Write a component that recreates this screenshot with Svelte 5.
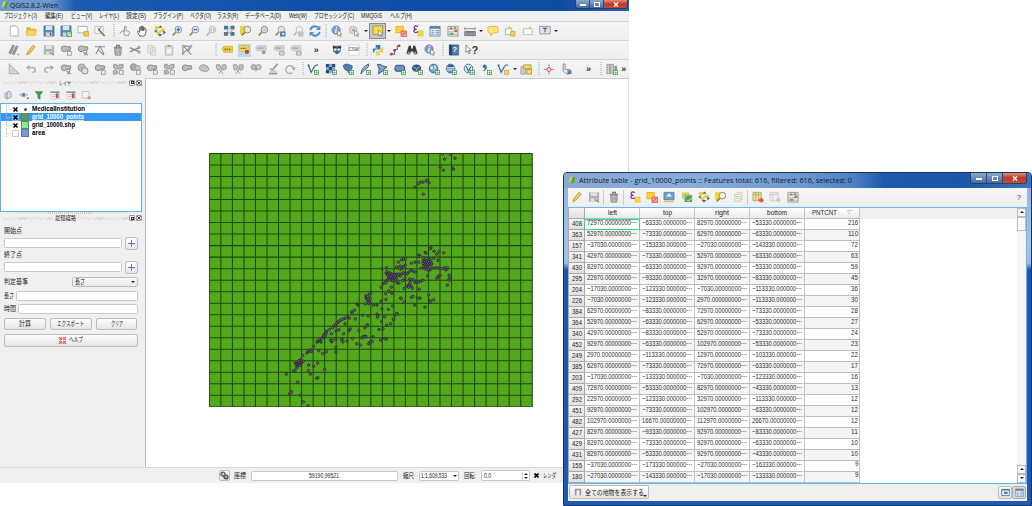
<script>
  const JP = '"Liberation Sans", "Noto Sans CJK JP", sans-serif';

  const menus = [
    ['プロジェクト(J)', 33, 8], ['編集(E)', 18, 8], ['ビュー(V)', 21, 7], ['レイヤ(L)', 20, 7],
    ['設定(S)', 20, 7], ['プラグイン(P)', 30, 7], ['ベクタ(O)', 21, 6], ['ラスタ(R)', 21, 7],
    ['データベース(D)', 36, 8], ['Web(W)', 18, 7], ['プロセッシング(C)', 40, 7], ['MMQGIS', 21, 8], ['ヘルプ(H)', 22, 0],
  ];

  const plus = '<rect x="8.2" y="8.2" width="4.3" height="4.3" fill="#fff" stroke="#4d9a5a" stroke-width=".9"/><path d="M10.35 9v2.8M9 10.35h2.8" stroke="#4d9a5a" stroke-width=".7"/>';
  const gplus = '<rect x="8" y="8" width="4.2" height="4.2" fill="#eee" stroke="#999" stroke-width=".9"/>';
  const cursor = '<path d="M7 5.5l5 4.4-2.2.2 1.2 2.3-1 .4-1.1-2.4L7.300 12z" fill="#fff" stroke="#777" stroke-width=".7"/>';
  const lens = (fill, s = '#888', cx = 8) =>
    `<circle cx="${cx}" cy="5" r="3.6" fill="${fill}" stroke="${s}" stroke-width="1"/><path d="M5 8L1.800 11.300" stroke="#9b7c3c" stroke-width="1.700"/>`;
  const blob = '<path d="M2 3.500Q4 1.500 6 2.500T11 3Q12.500 5 10.500 7Q8.500 6 6.500 7.500Q4.500 9 2.500 7.500Q.8 5.500 2 3.500z" fill="#bdbdbd" stroke="#8f8f8f" stroke-width="1.200"/>';
  const globe = '<circle cx="6" cy="6" r="4.700" fill="#6f9bc8" stroke="#34597f" stroke-width=".9"/>';
  const vee = '<path d="M1.500 2.500L4.500 10L8 4Q9 2 12 2" fill="none" stroke="#41709b" stroke-width="1.400"/><circle cx="1.700" cy="2.500" r="1.200" fill="#41709b"/>';
  const trash = '<path d="M2 3.500h9M5 3V1.500h3V3" fill="none" stroke="#777" stroke-width="1.200"/><path d="M3 4.500h7l-.5 7.500h-6z" fill="#ccc" stroke="#777"/><path d="M5.300 6v4.500M7.700 6v4.500" stroke="#777" stroke-width=".8"/>';
  const yell = '<rect x="1" y="1.500" width="8" height="7" fill="#f8d830" stroke="#e6a529" stroke-width=".8"/>';

  const icons = {
    newfile: '<path d="M2.500 1h6l2.500 2.500V12h-8.500z" fill="#fff" stroke="#aaa"/>',
    open: '<path d="M1.500 2.500h4l1 1.500h5v7h-10z" fill="#dfae36"/><path d="M1.500 11L3 5.500h10L11.200 11z" fill="#ffd55a" stroke="#e0aa30" stroke-width=".5"/>',
    save: '<path d="M1 1h11v11H1z" fill="#5b88b9" stroke="#3f6a9b" stroke-width=".7"/><path d="M3 1h7v4.500H3z" fill="#dce6ef"/><path d="M3 8h7v4H3z" fill="#cfd4d8"/><path d="M7.500 8.500h1.500v3H7.500z" fill="#555"/>',
    saveas: '<path d="M1 1h11v11H1z" fill="#5b88b9" stroke="#3f6a9b" stroke-width=".7"/><path d="M3 1h7v4.500H3z" fill="#dce6ef"/><path d="M3 8h4v4H3z" fill="#cfd4d8"/><path d="M7.500 7.500h5v5h-5z" fill="#eaf4ea" stroke="#4d9a5a"/><path d="M8.700 11.300l2.600-2.600" stroke="#4d9a5a"/>',
    composer: '<path d="M1 1.500h10v7H1z" fill="#fff" stroke="#aaa"/><path d="M7.500 7h5v5h-5z" fill="#f4ce42" stroke="#c9982c" stroke-width=".7"/>',
    manager: '<path d="M1 1.500h9v7.500H1z" fill="#fff" stroke="#bbb"/><path d="M5 5l6.500 7" stroke="#8a7645" stroke-width="1.700"/><path d="M4 3l2 3M7 2.500L5 6" stroke="#666"/>',
    touch: '<path d="M6 1.500v5.500l-1.500-1 1.500 5.500h4.500l1-4-4-1.500V1.500z" fill="#eee" stroke="#888" stroke-width=".8"/><path d="M1 9l3-3" stroke="#777"/>',
    hand: '<path d="M4 12L1.500 7l1-.6L4 8V2.500h1.400V6 1.500h1.500V6 2h1.500v4.500V3.500H10l1 2L10.500 9 9 12z" fill="#fff" stroke="#555" stroke-width="1"/>',
    pansel: '<path d="M1 1h4v3.500H1zM7 4h4.500v3.500H7zM3 6.500h4V10H3z" fill="#edcf32"/><path d="M7 .5l2.500 2.500h-5zM6.500 12.800l2.500-3H4zM12.900 8L10 5.800v4.400zM.1 6.500L3 4.500v4z" fill="#436b9c"/>',
    zoomin: lens('#e8eef4') + '<path d="M8 3v4M6 5h4" stroke="#356fae" stroke-width="1.500"/>',
    zoomout: lens('#e8eef4') + '<path d="M6 5h4" stroke="#356fae" stroke-width="1.500"/>',
    zoom11: '<g opacity=".55">' + lens('#eee') + '<path d="M6.500 3.200v3.600M9.500 3.200v3.600" stroke="#555"/></g>',
    full: '<path d="M1 .8h4.500v4.200H1zM8 .8h4.500v4.200H8zM1 7.500h4.500v4.200H1zM8 7.500h4.500v4.200H8z" fill="#4674a7"/><circle cx="7" cy="6" r="2.700" fill="#d8e0e8" stroke="#888" stroke-width=".8"/><path d="M5 8l-3.500 3.800" stroke="#9b7c3c" stroke-width="1.500"/>',
    zoomsel: '<path d="M0 1h6v9H0z" fill="#f1d537"/>' + lens('#f2eecb'),
    zoomlay: lens('#ddd') + '<path d="M6.500 3.500h4v3h-4z" fill="#ccc"/>',
    zoomlast: lens('#e8e8e8', '#999') + '<path d="M6.500 7h6v5.500h-6z" fill="#4d84bf"/><path d="M11 8.200L8 9.700l3 1.500z" fill="#fff"/>',
    zoomnext: '<g opacity=".5">' + lens('#eee') + '<path d="M6.500 7h6v5.500h-6z" fill="#999"/></g>',
    refresh: '<path d="M1.500 5.500A5 5 0 0 1 10 3" fill="none" stroke="#4b8fd0" stroke-width="2.100"/><path d="M12.300.5v5H7.500z" fill="#4b8fd0"/><path d="M11.500 7.500A5 5 0 0 1 3 10" fill="none" stroke="#4b8fd0" stroke-width="2.100"/><path d="M.7 12.500v-5h4.800z" fill="#4b8fd0"/>',
    info: '<circle cx="5.500" cy="5.500" r="4.600" fill="#7d9fc4" stroke="#5c80a8" stroke-width=".6"/><path d="M5.700 4.500l-.7 4" stroke="#fff" stroke-width="1.300"/><circle cx="6" cy="2.800" r=".8" fill="#fff"/>' + cursor,
    action: '<circle cx="5.500" cy="5.500" r="4" fill="#ddd" stroke="#bbb" stroke-width="1.800" stroke-dasharray="2 1"/><circle cx="5.500" cy="5.500" r="1.500" fill="#aaa"/>' + cursor,
    select: '<path d="M1 1h10.500v9.500H1z" fill="#f5df3c" stroke="#555" stroke-width=".9" stroke-dasharray="1.500 1"/>' + cursor,
    desel: yell + '<path d="M6.500 6.500h6v6h-6z" fill="#f3a09a" stroke="#db5a55" stroke-width=".9"/><path d="M7.500 11.500l4-4" stroke="#db4a45"/>',
    expr: '<path d="M6.500 1.700Q3.500.2 2.500 2.200T5 4.700Q1.500 5 2 7T6.500 7.500" fill="none" stroke="#7b3189" stroke-width="1.300"/><path d="M6.500 6.500H12V12H6.500z" fill="#f5db3b" stroke="#e0b030" stroke-width=".6"/>',
    table: '<path d="M1 1.500h11v10.500H1z" fill="#e9f0f5" stroke="#5d7f9c" stroke-width=".9"/><path d="M1 1.500h11v2.500H1z" fill="#587da2"/><path d="M2.500 6h3M2.500 8h3M2.500 10h3M7 6h4M7 8h4M7 10h4" stroke="#6d97b7"/>',
    abacus: '<path d="M1 1.500h11v10.500H1z" fill="#f6f1f0" stroke="#999"/><path d="M1 4.500h11M1 7.300h11M1 10h11" stroke="#888" stroke-width=".6"/><path d="M3 2.700h3v2H3zM8 5.500h3v2H8z" fill="#d85a55"/><path d="M3 8.500h4v2.200H3zM7.500 2.500H10v2H7.500z" fill="#66a86a"/>',
    measure: '<path d="M.8 7h11.500v4.500H.8z" fill="#8e9aa5" stroke="#59636d" stroke-width=".8"/><path d="M1 4h11M1 2.500v3M12 2.500v3M4 7v2M6.500 7v2M9 7v2" stroke="#555" stroke-width=".7"/>',
    tip: '<path d="M3 1.500h7Q12 1.500 12 3.500v3Q12 8.500 10 8.500H7L4 12V8.500H3Q1 8.500 1 6.500v-3Q1 1.500 3 1.500z" fill="#ffe47a" stroke="#dfb644"/>',
    newbm: '<path d="M1.500 4h7v6.500h-7z" fill="#fff" stroke="#aaa"/><path d="M6 1.200l2 2.500H4z" fill="#e7bd52"/><path d="M7 7h5v5H7z" fill="#f6cf4f" stroke="#c89833" stroke-width=".7"/>',
    bm: '<path d="M1.500 4h9.500v6.500H1.500z" fill="#fff" stroke="#bbb"/><path d="M8.500 1l2 3H7z" fill="#e7bd52"/>',
    textann: '<path d="M.8 1.500h11.400v8H.8z" fill="#dfe7ed" stroke="#8b9aa8"/><path d="M4 3.500h5M6.500 3.500V8" stroke="#444"/><path d="M2 9.500v2.500l3-2.500" fill="#ccc"/>',
    pens: '<path d="M1 10L5 1l2 .8-4 9zM4.500 10.500L9 2l2 .8-4.500 9z" fill="#999" stroke="#888" stroke-width=".8"/><path d="M10 11l1 1.500 1-1.500z" fill="#444"/>',
    pencil: '<path d="M2 11.700l.8-3L8.500 1.500 11 3.300 5 10.500z" fill="#f0cd45" stroke="#b48e27" stroke-width=".8"/><path d="M8.500 1.500L11 3.300" stroke="#caa" stroke-width="1.500"/>',
    gsave: '<path d="M1 1.500h11v10H1z" fill="#b0b0b0"/><path d="M3 1.500h7v4H3zM3 8h7v3.500H3z" fill="#e2e2e2"/><path d="M7 9l5 3" stroke="#999" stroke-width="1.500"/>',
    blob1: blob + gplus,
    blob2: blob + '<path d="M7 9l5 3M8 12l3-4" stroke="#888" stroke-width="1.200"/>',
    blob3: blob,
    blob4: '<path d="M1.500 6Q2 1.500 6.500 2T12 7Q11 9.500 6.500 9T1.500 6z" fill="#c5c5c5" stroke="#929292"/>',
    ghost: '<circle cx="5" cy="5" r="4" fill="#bbb" stroke="#999"/><circle cx="8.500" cy="8.500" r="3.500" fill="#ddd" stroke="#888"/>',
    disc: '<circle cx="5" cy="4.500" r="3.700" fill="#a9a9a9" stroke="#989898"/><path d="M7 3h5v4.500H7z" fill="#c9c9c9" stroke="#a0a0a0" stroke-width=".8"/>' + gplus,
    twin: '<path d="M2 1.500Q5 .5 6 3q3-2.500 6-1.300 1 3-1.500 4.800H6Q3 7 1.500 5z" fill="#b9b9b9" stroke="#959595"/><path d="M1.500 8.500Q4 6.500 6 9T4 12 1.500 11z" fill="#b9b9b9" stroke="#959595"/>' + gplus,
    node: '<path d="M1 3h11M2 11L6.500 2.500 11 11M4.500 6l6 6" fill="none" stroke="#8b8b8b" stroke-width="1.100"/>',
    trash: trash,
    cut: '<path d="M1 4l9 4M1 8.500L11 4" stroke="#888" stroke-width="1.500"/><circle cx="11" cy="3.700" r="1.200" fill="none" stroke="#888"/><circle cx="11" cy="8.800" r="1.200" fill="none" stroke="#888"/>',
    copy: '<path d="M2 1.500h5.500v8H2zM5 4h5.500v8H5z" fill="#eee" stroke="#c2c2c2" stroke-width=".9"/><path d="M6.500 6.500h3M6.500 8.500h3" stroke="#ccc"/>',
    paste: '<path d="M2.500 2h8v10h-8z" fill="#ddd" stroke="#b5b5b5"/><path d="M5 1h3v2H5z" fill="#999"/><path d="M4.500 5h4v5h-4z" fill="#f5f5f5"/>',
    zoompan: '<path d="M3 3.500h6V11H3z" fill="#f6f4e6" stroke="#c5c2ad" stroke-width=".9"/><path d="M5 1.800h6V9H9" fill="none" stroke="#c9c9c9" stroke-width=".9"/><path d="M4.500 6h3M4.500 8h3" stroke="#cbbf7a"/>',
    netx: '<path d="M2 1.500l9 10M2 11V2l9 1-9 7M11 2L8 8" fill="none" stroke="#999" stroke-width="1.400"/><path d="M1 .7h2.500v2.500H1zM10 .9h2v2h-2zM1 9.500h2.500V12H1z" fill="#aaa"/>',
    abc: '<path d="M1 5l2-2.500h9.500v6.500H3z" fill="#f1cf3c" stroke="#c9a32b" stroke-width=".7"/><path d="M3.500 5.800h7" stroke="#8d7a30" stroke-width="1.700" stroke-dasharray="1.700 .8"/>',
    abcpin: '<path d="M1 3.500l1.500-1.700H12v6H2.500L1 6.200z" fill="#f4d95b" stroke="#d5b241" stroke-width=".7"/><path d="M3 4.700h6" stroke="#77662a" stroke-width="1.500" stroke-dasharray="1.700 .8"/><circle cx="9.700" cy="8.500" r="2.300" fill="#c83b36"/>',
    gabc: '<path d="M1 3.500l1.500-1.700H12v5.500H2.500L1 6z" fill="#d5d5d5" stroke="#bbb" stroke-width=".7"/><path d="M3 4.500h6" stroke="#888" stroke-width="1.400" stroke-dasharray="1.700 .8"/><circle cx="9.500" cy="9" r="2" fill="#999"/>',
    gabc2: '<path d="M1 3.500l1.500-1.700H12v5.500H2.500L1 6z" fill="#d5d5d5" stroke="#bbb" stroke-width=".7"/><path d="M3 4.500h6" stroke="#888" stroke-width="1.400" stroke-dasharray="1.700 .8"/><path d="M7 8.500h5v3.500H7z" fill="#ddd" stroke="#999" stroke-width=".9"/>',
    owl: '<path d="M2.500 2h8v6l-4 3.500-4-3.500z" fill="#2f6da3"/><path d="M2 1.500l4.500 3 4.500-3V5H2z" fill="#333"/><circle cx="4.700" cy="6" r="1.500" fill="#dceaf5"/><circle cx="8.300" cy="6" r="1.500" fill="#dceaf5"/>',
    csw: '<path d="M.7 1h11.600v11H.7z" fill="#fff" stroke="#ccc" stroke-width=".8"/>',
    python: '<path d="M4 1h5v5H4Q2.500 6 2.500 9H1V5h5V4H4z" fill="#3a75a8"/><path d="M9 12.200H4.500V7.500H8Q10 7 9.800 4h2.400v5H7v1h2z" fill="#f2cc45"/>',
    route: '<path d="M2 11h4V6h3V2h2.500" fill="none" stroke="#4a78a9" stroke-width="1.200"/><circle cx="2.500" cy="11" r="1.500" fill="#cd3833"/><circle cx="6" cy="7" r="1.500" fill="#cd3833"/><circle cx="11" cy="2" r="1.500" fill="#cd3833"/>',
    bino: '<path d="M3 2h2.500v3h2V2H10l2.500 8q-2.500 3-4.500 0V8H5v2Q3 13 .5 10z" fill="#3a3a3a"/><circle cx="3" cy="9.700" r="1.300" fill="#999"/><circle cx="10" cy="9.700" r="1.300" fill="#999"/>',
    help: '<path d="M1.500 1h10v11h-10z" fill="#4d79ac" stroke="#34537a" stroke-width=".7"/><path d="M1.500 1H4v11H1.500z" fill="#223a5a"/>',
    whats: '<path d="M1 1l5.500 6-2.200.1 1.300 3-1.200.5-1.200-3L1 9z" fill="#fff" stroke="#555" stroke-width=".7"/>',
    rule: '<path d="M1.500 1.500l10 10h-10z" fill="#ddd" stroke="#b8b8b8" stroke-width="1.500"/><path d="M4 7l2.500 2.500H4z" fill="#f0f0f0" stroke="#bbb" stroke-width=".7"/>',
    undo: '<path d="M4 5h4.500q2.500 0 2.500 2.500T8 10" fill="none" stroke="#b8b8b8" stroke-width="1.900"/><path d="M5 1.800v6.400L1 5z" fill="#b0b0b0"/>',
    redo: '<path d="M9 5H4.500Q2 5 2 7.500T5 10" fill="none" stroke="#b8b8b8" stroke-width="1.900"/><path d="M8 1.800v6.400L12 5z" fill="#b0b0b0"/>',
    split: '<path d="M1.500 2h3.800l1 4L3 8 1.500 5zM8 2h3.800l.5 4-3 2-2-2z" fill="#c5c5c5" stroke="#959595"/><path d="M4 12l5-7M9 12L5 7" stroke="#999"/>',
    merge: '<circle cx="4" cy="4.500" r="2.800" fill="#bbb" stroke="#959595"/><circle cx="9.300" cy="4.500" r="2.800" fill="#ccc" stroke="#959595"/><path d="M6.500 5v4" stroke="#888" stroke-width="1.200"/>',
    brush: '<path d="M11.500 1L6.500 6.500M2 11.500h9" stroke="#999" stroke-width="1.800"/><path d="M2 5.500l4 4 2-3z" fill="#aaa"/><path d="M3 8l7-.5v3H4z" fill="#ccc"/>',
    rot: '<path d="M9 10.500A4.300 4.300 0 1 1 10.500 6" fill="none" stroke="#b5b5b5" stroke-width="1.800"/><path d="M8 5h5l-2.500 3.500z" fill="#a5a5a5"/>',
    vec: vee + plus,
    raster: '<path d="M1 1h10v10H1z" fill="#7fa7cf"/><path d="M1 1h3.300v3.300H1zM7.700 1H11v3.300H7.700zM4.300 4.300h3.400v3.400H4.300zM1 7.700h3.300V11H1z" fill="#2d4b72"/>' + plus,
    pg: '<path d="M1.500 2.500Q4 .5 7 1.500T11 3q.5 4-2 4.500v3Q6 11 6 8 2 8.500 1.500 2.500z" fill="#4f7fae" stroke="#34597f" stroke-width=".8"/>' + plus,
    lite: '<path d="M2 12Q3 4 10.500 1 11.500 4 7.500 6.500 4.500 8 2 12z" fill="#8fb3d6" stroke="#3c638c" stroke-width="1"/>' + plus,
    mssql: '<path d="M1.500 1.500Q5 1 7 3l5 1.500Q9 5.500 8 8L2.500 12Q5 7 1.500 1.500z" fill="#6f97c0" stroke="#34597f" stroke-width="1"/><path d="M3 3l5 2-4 4" fill="none" stroke="#c3d6e8" stroke-width=".7"/>' + plus,
    ora: '<path d="M3 2.500h6.500Q11.500 3 11.500 6T9.500 9H3.500Q1 9 1 6t2-3.500z" fill="#6a93bf" stroke="#34597f" stroke-width="1.100"/>' + plus,
    oras: '<ellipse cx="6" cy="5.500" rx="5" ry="4" fill="#30527c"/><path d="M3 4h2v2H3zM7 4h2v2H7zM5 6h2v2H5z" fill="#8fb1d4"/>' + plus,
    wms: globe + '<path d="M3 4h2v2.500H3zM7 2.500l2 2-1.500 2zM5 7.500h3" fill="#dce8f3" stroke="#dce8f3" stroke-width=".8"/>' + plus,
    wcs: globe + '<path d="M1.500 5h9M1.500 7.500h9" stroke="#dce8f3" stroke-width="1"/><path d="M3.500 2.500h5v1.800h-5z" fill="#29486f"/>' + plus,
    wfs: '<circle cx="6" cy="6" r="4.700" fill="#dfe9f2" stroke="#41709b" stroke-width="1"/><path d="M3.500 3.500L6 9l2.500-5" fill="none" stroke="#41709b" stroke-width="1.300"/>' + plus,
    csv: '<path d="M3 3.500Q3 1.500 5 1.500T7.500 4Q7.500 8 3 9 5.500 7 5 5.500 3 5.500 3 3.500z" fill="#41709b"/>' + plus,
    shp: vee + '<path d="M8 8h4.500v4.500H8z" fill="#f3d765" stroke="#c0962b" stroke-width=".7"/>',
    paste2: '<path d="M1 4h5v8H1z" fill="#c9ced3" stroke="#8a9197" stroke-width=".8"/><path d="M4 2h8v4.500H4z" fill="#ecd56b" stroke="#a08b3d" stroke-width=".8"/><path d="M7.500 7h5v5h-5z" fill="#f7dd6f" stroke="#c0962b"/>',
    cross: '<path d="M1 7h11M6.500 1v11.500" stroke="#8b8b8b" stroke-width=".9"/><circle cx="6.500" cy="7" r="2.200" fill="#f4d0cd" stroke="#cc5a53"/>',
    touch2: '<path d="M3.500 1v8l4 3h2L11 7H5.500V1z" fill="#eee" stroke="#777" stroke-width=".8"/><path d="M8 8h4.500v4H8z" fill="#5c7d9e"/>',
    books: '<path d="M1 1.500h3v10H1zM5 1.500h3v10H5z" fill="#ccc" stroke="#888" stroke-width=".8"/><path d="M9 3h3v8.500H9z" fill="#8aa095"/>' + plus,
    layeradd: '<path d="M2.500 4.500L8 1.500l2.500 2V9L5 12l-2.500-2z" fill="#d9dfe6" stroke="#7b8896" stroke-width=".9"/><path d="M5.500 3.500V11" stroke="#7b8896"/>',
    eye: '<path d="M1 6.500Q6 2 11 6.500 6 10.500 1 6.500z" fill="#dce3ea" stroke="#8b97a4" stroke-width=".9"/><circle cx="6" cy="6.300" r="2" fill="#557aa3"/><path d="M10 10h3l-1.500 2z" fill="#333"/>',
    filter: '<path d="M1.500 2h10L8 6.500V12l-3-1.500v-4z" fill="#3f9a55" stroke="#2c7a40" stroke-width=".5"/>',
    expand: '<path d="M1 2h11v9.500H1z" fill="#fff" stroke="#b5b5cc" stroke-width=".8"/><path d="M1 2h11v2H1z" fill="#6a8fd6"/><path d="M7.500 4.500H11v6H7.500z" fill="#dc4a3e"/><path d="M2.500 6h4M2.500 8.500h4" stroke="#e3a080"/>',
    remove: '<path d="M1.500 2h9v8.500h-9z" fill="#f5f5f5" stroke="#bbb"/><circle cx="10.500" cy="10" r="2.200" fill="#ec8a84"/>',
    top: '<path d="M1 1.500h11v8H1z" fill="#70a1cb" stroke="#456f97" stroke-width=".7"/><path d="M6.500 2.500L9.500 6h-6z" fill="#fff"/><path d="M1 11.300h11" stroke="#e5c53f" stroke-width="1.700"/>',
    invert: '<path d="M1 1.500h7.500v6.500H1z" fill="#cfd266"/><path d="M4 4.500h8V12H4z" fill="#5c9e58"/><path d="M3 10Q4 4.500 10 3.500M12 7Q10 11 6 10.500" fill="none" stroke="#a8cf8c" stroke-width="1.300"/>',
    newcol: '<path d="M1 1.500h9v9H1z" fill="#f2e08e" stroke="#9b9b73" stroke-width=".8"/><path d="M1 4h9M4 1.500v9M7 1.500v9" stroke="#9b9b73" stroke-width=".7"/><circle cx="10" cy="10" r="2.500" fill="#dd5a50"/>',
    gcol: '<path d="M1 1.500h9v9H1z" fill="#eee" stroke="#c5c5c5" stroke-width=".8"/><path d="M1 4h9M4 1.500v9" stroke="#ccc"/><circle cx="10" cy="10" r="2.300" fill="#c8c8c8"/>',
    formv: '<path d="M1 2h11v9H1z" fill="#eef4fb" stroke="#4772b0" stroke-width="1.200"/><path d="M1 2h11v1.500H1z" fill="#2b62b5"/><path d="M4.500 5.500h5v3h-5z" fill="#3970bb"/>',
    help4: '<path d="M1.500 1.500l3 3M11.500 1.500l-3 3M1.500 11.500l3-3M11.500 11.500l-3-3" stroke="#e05a52" stroke-width="1.700"/><path d="M5.200 1.500v3.700H1.500M7.800 1.500v3.700h3.700M5.200 11.500V7.800H1.500M7.800 11.500V7.800h3.700" fill="none" stroke="#e05a52" stroke-width="1.300"/>',
  };

  const row1 = 'newfile open save saveas composer manager |7.4 touch hand pansel zoomin zoomout zoom11 full zoomsel zoomlay zoomlast zoomnext refresh |5 info action v6 *select v6 desel expr table abacus measure v6 tip newbm bm textann v5'.split(' ');
  const row2 = 'pens pencil gsave blob1 blob2 node trash cut copy paste netx |23 abc abcpin gabc gabc2 gabc2 »23.7 owl csw |6.5 python route bino info |7 help whats'.split(' ');
  const row3 = 'rule undo redo blob2 ghost blob1 twin disc blob1 twin blob3 blob4 split split merge brush rot |6 vec raster pg lite mssql ora oras wms wcs wfs csv shp v5.5 paste2 |6 cross touch2 »27 |1 books »7'.split(' ');
  const attrTools = 'pencil gsave /3 trash /3.5 expr desel top invert pansel zoomsel zoompan /2.5 newcol gcol abacus'.split(' ');

  const layers = [
    { name: 'MedicalInstitution', w: 53, dot: true, on: true },
    { name: 'grid_10000_points', w: 52, color: '#4ca35a', on: true, sel: true },
    { name: 'grid_10000.shp', w: 43, color: '#8aeb96', on: true },
    { name: 'area', w: 13, color: '#6b9cf0', on: false },
  ];

  const cols = ['left', 'top', 'right', 'bottom'];
  const raw = `408 72970 -63330 82970 -53330 216
363 52970 -73330 62970 -63330 110
157 -37030 -153330 -27030 -143330 72
341 42970 -73330 52970 -63330 63
430 82970 -63330 92970 -53330 59
295 22970 -93330 32970 -83330 45
204 -17030 -123330 -7030 -113330 36
226 -7030 -123330 2970 -113330 30
384 62970 -83330 72970 -73330 28
364 52970 -63330 62970 -53330 27
340 42970 -83330 52970 -73330 24
452 92970 -63330 102970 -53330 23
249 2970 -113330 12970 -103330 22
385 62970 -73330 72970 -63330 17
203 -17030 -133330 -7030 -123330 16
409 72970 -53330 82970 -43330 13
292 22970 -123330 32970 -113330 12
451 92970 -73330 102970 -63330 12
482 102970 16670 112970 26670 12
427 82970 -93330 92970 -83330 11
429 82970 -73330 92970 -63330 10
431 82970 -53330 92970 -43330 10
155 -37030 -173330 -27030 -163330 9
180 -27030 -143330 -17030 -133330 9
225 12970 -103330 22970 -93330 9`;
  const rows = raw.split('\n').map((l) => l.split(' '));
  const cell = (v) => (v + '.0000000000').slice(0, 14).replace('-', '−') + '⋯';
  const digits = (s) => s.length * 3.4;

  const pts = `727,24 751,25 764,37 733,40 720,63 729,73 756,66 759,70 678,104 682,107 686,111 668,109 661,109 654,113 643,124 669,145
692,306 688,309 675,320 701,316 716,317 730,321 709,325 656,328 660,332 653,331 700,337 713,343 671,335 677,322 633,352 644,349 655,349 663,367 690,372 698,366 707,366 716,366 724,368 733,366 741,366 737,372 735,370 746,388 748,396 745,403 741,418 719,388 714,391 712,396 709,398 682,390
668,345 674,343 683,342 689,341 673,348 679,347 685,348 676,352 681,352 687,353 691,356 674,357 679,358 684,358 694,354 671,362 677,363 683,363 688,362 674,369 680,368 685,369 668,353 692,348 682,372
594,349 604,342 609,341 615,339 600,361 615,358 610,362 604,366 602,370 597,368 613,365 589,363 559,366 545,369
557,382 560,378 563,384 568,381 573,384 562,389 567,388 572,389 577,387 582,386 587,385 565,393 570,394 575,393 580,392 585,392 590,390 564,398 568,400 573,399 578,398 583,397 588,396 572,404 577,404 582,403 586,402 562,403 557,406 598,387 604,384 609,381 613,385 595,385 600,390 620,384 632,374 638,376 645,379 626,378
590,411 596,412 607,404 614,399 628,400 632,402 640,402 643,410 650,409 655,408 662,406 667,403 629,410 627,416 623,420 618,422 632,421 636,427 612,428 625,424 657,430 573,424 565,435 570,438 575,442 556,444 557,461 542,466 542,424 548,413 553,412 558,410 601,457 603,458 612,469 633,455 638,452 652,457 659,457 643,478 674,484 685,447 690,464 689,470 700,462
512,440 508,444 497,450 502,452 497,457 505,458 500,462 506,466 510,460 504,472 495,474 510,475 520,478 530,478 471,475 473,478 463,493 454,498 456,503 487,508 504,510 465,519 530,505 533,509 531,514 545,489 564,491 577,480 553,513 544,528 536,551 548,549 559,538 571,534 579,521 580,519 585,508 590,503 589,505
443,513 447,517 435,517 430,519 424,521 418,525 412,530 409,533 405,538 400,541 397,545 414,528 434,534 447,553 450,549 445,556 416,552 407,556 430,564 388,551 379,556 377,562 372,566 374,572 368,574 364,578 370,570 376,566 360,585 352,586 356,583 362,589 350,589 393,564 391,583 394,588 395,584 406,580 425,580 424,584 428,588 440,586 457,578 475,554 493,546 501,537 499,541 484,576 488,573 494,571 490,574 497,572 469,594 480,598 505,594 509,589 516,587 510,591 518,573 541,583 553,578 558,580
340,601 407,605 407,619 333,617 331,612 325,617 320,621 322,618 355,615 367,623 378,618 307,629 302,641 300,645 285,652 289,652 294,650 299,649 305,648 309,646 287,656 292,656 297,655 302,655 294,660 290,661 299,659 296,645 352,652 340,661 325,658 324,674 330,685 373,671 289,667 280,674 284,677 258,685 349,697 353,696 292,709 273,737 268,744 271,741 301,748 309,768 323,780`
    .split(/\s+/).map((p) => p.split(',').map(Number));

  const vlines = Array.from({ length: 29 }, (_, i) => 27 + i * 34.6);
  const hlines = Array.from({ length: 23 }, (_, i) => 23 + i * 34.55);
</script>

{#snippet fit(text, w, size = 7, color = '#222', weight = 400, family = JP)}
  <svg class="fit" width={w} height="10" viewBox="0 0 {w} 10">
    <text x="0" y={5 + size * 0.36} textLength={w} lengthAdjust="spacingAndGlyphs" font-size={size} fill={color} font-weight={weight} font-family={family}>{text}</text>
  </svg>
{/snippet}

{#snippet ico(name, size = 12)}
  <svg class="ico" width={size} height={size} viewBox="0 0 13 13">{@html icons[name]}</svg>
{/snippet}

{#snippet tools(list)}
  {#each list as t}
    {#if t[0] === '|'}
      <i class="grip" style="width:{t.slice(1)}px"></i>
    {:else if t[0] === '/'}
      <i class="sep" style="width:{t.slice(1)}px"></i>
    {:else if t[0] === 'v' && t.length < 5 && t !== 'vec'}
      <i class="drop" style="width:{t.slice(1)}px"></i>
    {:else if t[0] === '»'}
      <span class="more" style="width:{t.slice(1)}px">»</span>
    {:else}
      <span class="tool" class:on={t[0] === '*'} class:hot={t === 'abcpin'}>
        {@render ico(t.replace('*', ''))}
        {#if t === 'csw'}<b class="over csw">CSW</b>{/if}
        {#if t === 'help'}<b class="over q">?</b>{/if}
        {#if t === 'whats'}<b class="over w">?</b>{/if}
      </span>
    {/if}
  {/each}
{/snippet}

{#snippet logo()}
  <svg width="8" height="8" viewBox="0 0 8 8"><path d="M1 7L2 1.500 4.500 0 4 4z" fill="#e8d83c" /><path d="M3 6.500L4 2l3.500-1.500L6 7l-2 .8z" fill="#56a63c" /></svg>
{/snippet}

{#snippet caption()}
  <span class="wbtn"><i class="min"></i></span><span class="wbtn"><i class="max"></i></span><span class="wbtn close"><svg width="6" height="5" viewBox="0 0 6 5"><path d="M1 .5l4 4M5 .5l-4 4" stroke="#fff" stroke-width="1.300" /></svg></span>
{/snippet}

{#snippet dockTitle(text, w)}
  <div class="dock-title">
    <i class="ridge"></i>{@render fit(text, w, 6)}<i class="ridge"></i>
    <span class="mini"><i class="float"></i></span><span class="mini"><svg width="4" height="4" viewBox="0 0 4 4"><path d="M.3.3l3.400 3.400M3.700.3L.3 3.700" stroke="#222" stroke-width=".9" /></svg></span>
  </div>
{/snippet}

<div class="desktop">
  <section class="main">
    <header class="title">
      {@render logo()}
      <span class="title-text">{@render fit('QGIS2.8.2-Wien', 48, 7, '#111', 400, '"Open Sans", sans-serif')}</span>
      <span class="caption">{@render caption()}</span>
    </header>
    <nav class="menu">
      {#each menus as [t, w, gap]}
        <span style="margin-right:{gap}px">{@render fit(t, w, 6.5)}</span>
      {/each}
    </nav>
    <div class="bar">{@render tools(row1)}</div>
    <div class="bar">{@render tools(row2)}</div>
    <div class="bar">{@render tools(row3)}</div>

    <div class="body">
      <aside class="docks">
        {@render dockTitle('レイヤ', 12)}
        <div class="layer-tools">
          {#each ['layeradd', 'eye', 'filter', 'expand', 'expand', 'remove'] as n}
            <span>{@render ico(n, 10)}</span>
          {/each}
        </div>
        <div class="tree">
          {#each layers as l}
            <div class="layer" class:sel={l.sel}>
              <i class="branch"></i>
              <i class="check" class:off={!l.on}>{#if l.on}<svg width="5" height="5" viewBox="0 0 5 5"><path d="M.5.5l4 4M4.500.5l-4 4" stroke="#000" stroke-width="1.500" /></svg>{/if}</i>
              {#if l.dot}<i class="swatch"><i class="point"></i></i>{:else}<i class="swatch fill" style="background:{l.color}"></i>{/if}
              <span class:u={l.sel}>{@render fit(l.name, l.w, 6.6, l.sel ? '#fff' : '#000', 700)}</span>
            </div>
          {/each}
        </div>
        <i class="splitter"></i>
        {@render dockTitle('最短経路', 21)}
        <div class="form">
          <div class="lab first">{@render fit('開始点', 18, 6.5)}</div>
          <div class="line"><i class="input"></i><span class="btn sq"><i class="plus"></i></span></div>
          <div class="lab">{@render fit('終了点', 18, 6.5)}</div>
          <div class="line"><i class="input"></i><span class="btn sq"><i class="plus"></i></span></div>
          <div class="crit">{@render fit('判定基準', 24, 6.5)}<span class="combo">{@render fit('長さ', 10, 6.5)}<i class="drop"></i></span></div>
          <div class="len">{@render fit('長さ', 10, 6.5)}<i class="input"></i></div>
          <div class="len">{@render fit('時間', 12, 6.5)}<i class="input"></i></div>
          <div class="btns">
            <span class="btn">{@render fit('計算', 12, 6.5)}</span>
            <span class="btn">{@render fit('エクスポート', 27, 6.5)}</span>
            <span class="btn">{@render fit('クリア', 12, 6.5)}</span>
          </div>
          <span class="btn wide">{@render ico('help4', 9)}{@render fit('ヘルプ', 14, 6.5)}</span>
        </div>
      </aside>
      <main class="canvas">
        <svg class="map" width="324" height="254.300" viewBox="26 21.500 972 763">
          <rect x="27" y="23" width="969" height="760" fill="#54a81c" />
          <g stroke="#1d4708" stroke-width="3.100">
            {#each vlines as x}<path d="M{x} 23V783" />{/each}
            {#each hlines as y}<path d="M27 {y}H996" />{/each}
          </g>
          <g fill="#77708a" stroke="#25232f" stroke-width="2.600">
            {#each pts as [x, y]}<circle cx={x} cy={y} r="3.600" />{/each}
          </g>
        </svg>
      </main>
    </div>

    <footer class="status">
      <span class="btn gear"><svg width="9" height="9" viewBox="0 0 9 9"><circle cx="3" cy="3.200" r="2" fill="none" stroke="#555" stroke-width="1.300" /><circle cx="6" cy="6" r="2" fill="#bbb" stroke="#444" stroke-width="1.200" /><path d="M1 1l6 7" stroke="#666" stroke-width=".8" /></svg></span>
      <span class="s1">{@render fit('座標', 12, 6.5)}</span>
      <span class="field coord">{@render fit('59190,99521', 30, 6.5)}</span>
      <span class="s2">{@render fit('縮尺', 11, 6.5)}</span>
      <span class="field scale">{@render fit('1:1,609,533', 26, 6.5)}<i class="drop"></i></span>
      <span class="s3">{@render fit('回転:', 12, 6.5)}</span>
      <span class="field rot">{@render fit('0.0', 7, 6.5)}<i class="spin"><i class="up"></i><i class="drop"></i></i></span>
      <svg class="x" width="5" height="5" viewBox="0 0 5 5"><path d="M.5.5l4 4M4.500.5l-4 4" stroke="#000" stroke-width="1.700" /></svg>
      {@render fit('レンダ', 13, 6.5)}
    </footer>
  </section>

  <section class="attr">
    <header class="attr-title">
      {@render logo()}
      <span class="title-text">{@render fit('Attribute table - grid_10000_points :: Features total: 616, filtered: 616, selected: 0', 273, 7.8, '#0c1a33', 400, '"Open Sans", sans-serif')}</span>
      <span class="caption">{@render caption()}</span>
    </header>
    <div class="attr-inner">
      <div class="attr-bar">{@render tools(attrTools)}<span class="qm">?</span></div>
      <div class="grid-wrap">
        <div class="grid">
          <div class="r head">
            <span class="rh"></span>
            {#each cols as c}<span class="c">{@render fit(c, { left: 9, top: 9, right: 14, bottom: 20 }[c], 6.8)}</span>{/each}
            <span class="c pn">{@render fit('PNTCNT', 25, 6.8)}<svg width="6" height="5" viewBox="0 0 6 5"><path d="M5.500.5H.5L3 4.500" fill="none" stroke="#bbb" stroke-width=".8" /></svg></span>
          </div>
          {#each rows as r, i}
            <div class="r" class:alt={i % 2}>
              <span class="rh">{@render fit(r[0], 10, 6.8)}</span>
              {#each r.slice(1, 5) as v, j}
                <span class="c" class:cur={i === 0 && j === 0}>{@render fit(cell(v), 50, 7, '#2a2a2a')}</span>
              {/each}
              <span class="c num">{@render fit(r[5], digits(r[5]), 7, '#2a2a2a')}</span>
            </div>
          {/each}
        </div>
        <div class="scroll">
          <span class="sb"><i class="up"></i></span>
          <span class="thumb"></span>
          <span class="space"></span>
          <span class="sb"><i class="up"></i></span>
          <span class="sb"><i class="drop"></i></span>
        </div>
      </div>
      <footer class="attr-foot">
        <span class="btn show"><svg width="8" height="8" viewBox="0 0 8 8"><path d="M1 1.500h6M1.700 1v6.500M6.300 1v6.500" fill="none" stroke="#999" stroke-width="1.700" /></svg>{@render fit('全ての地物を表示する', 59, 7.2)}<i class="drop low"></i></span>
        <span class="btn view">{@render ico('formv', 9)}</span><span class="btn view on">{@render ico('table', 9)}</span>
      </footer>
    </div>
  </section>
</div>

<style>
  :global(body) { margin: 0; background: #fff; overflow: hidden; }
  .desktop { position: relative; width: 1032px; height: 506px; overflow: hidden; background: #fff; font: 7px "Liberation Sans", "Noto Sans CJK JP", sans-serif; color: #222; }
  .desktop :is(div, span, i, header, footer, section, nav, aside, main) { box-sizing: border-box; }
  i { display: block; font-style: normal; flex: none; }
  svg { display: block; flex: none; }
  .fit { overflow: visible; }

  .main { width: 629px; height: 483px; display: flex; flex-direction: column; background: #f0f0f0; }
  .title { height: 11px; flex: none; display: flex; align-items: center; padding-bottom: 1px; overflow: hidden; background: linear-gradient(90deg, #6f9bd0 0, #6d98cd 50px, #1d5bb0 75px, #124ea6 300px, #104ba2 560px, #2a60ad 629px); }
  .title > svg { margin-left: 1px; }
  .title-text { margin-left: 1px; }
  .caption { margin-left: auto; display: flex; align-self: flex-start; height: 9px; margin-right: 1px; border: 1px solid #23406f; border-top: 0; border-radius: 0 0 3px 3px; overflow: hidden; }
  .wbtn { display: flex; align-items: center; justify-content: center; width: 14px; height: 8px; background: linear-gradient(#8aa9d0, #47699c); border-right: 1px solid #294c80; }
  .wbtn.close { width: 23px; border: 0; background: linear-gradient(#e09078, #b93a26 50%, #cf4a30); }
  .min { width: 6px; height: 2px; background: #fff; margin-top: 2px; }
  .max { width: 6px; height: 5px; border: 1.500px solid #fff; }
  .menu { height: 10px; flex: none; display: flex; align-items: center; padding-left: 4px; }
  .bar { height: 19px; flex: none; display: flex; align-items: center; padding-left: 5.500px; border-top: 1px solid #d5d5d5; background: linear-gradient(#f5f5f5, #eee); }
  .tool { position: relative; flex: none; width: 17.250px; height: 17px; display: flex; align-items: center; justify-content: center; }
  .tool.on { background: #c9c9c9; border: 1px solid #888; height: 16px; }
  .tool.hot::before { content: ''; position: absolute; inset: 2px; background: #b9d9f5; z-index: 0; }
  .tool .ico { position: relative; }
  .over { position: absolute; line-height: 1; }
  .csw { font-size: 4.500px; top: 6px; left: 3px; color: #777; }
  .q { font-size: 8px; top: 4px; left: 7px; color: #fff; }
  .w { font-size: 11px; top: 3px; left: 9px; color: #333; }
  .grip { height: 14px; position: relative; }
  .grip::after { content: ''; position: absolute; right: 1px; top: 0; width: 2px; height: 14px; background: repeating-linear-gradient(#ccc 0 1px, transparent 1px 2px); }
  .sep { height: 15px; border-left: 1px solid #ccc; }
  .drop, .up { width: 6px; height: 4px; display: flex; justify-content: center; align-items: center; }
  .drop::after, .up::after { content: ''; border: 2px solid transparent; border-top: 2.500px solid #222; border-bottom: 0; }
  .up::after { border-top: 0; border-bottom: 2.500px solid #222; }
  .more { flex: none; text-align: center; font-size: 9px; font-weight: 700; color: #333; }

  .body { flex: 1; display: flex; min-height: 0; }
  .docks { width: 145px; display: flex; flex-direction: column; padding: 0 3px 0 0; background: #f0f0f0; }
  .canvas { flex: 1; border-left: 1px solid #bdbdbd; border-top: 1px solid #ccc; border-right: 1px solid #ddd; background: #fff; padding: 73.600px 0 0 62.500px; }
  .dock-title { height: 9px; flex: none; display: flex; align-items: center; gap: 2px; padding-left: 2px; }
  .ridge { flex: 1; height: 3px; background: repeating-linear-gradient(135deg, #d4d4d4 0 1px, #f3f3f3 1px 2.200px); }
  .mini { width: 6px; height: 6px; border: 1px solid #999; border-radius: 1px; display: flex; align-items: center; justify-content: center; margin-left: -1px; }
  .float { width: 3px; height: 3px; border: 1px solid #333; }
  .layer-tools { display: flex; height: 15px; align-items: center; padding-left: 3px; margin-bottom: 1px; }
  .layer-tools span { width: 15.700px; display: flex; }
  .tree { height: 108.500px; flex: none; border: 1px solid #62aeef; background: #fff; width: 142px; padding-top: 1.500px; }
  .layer { height: 7.900px; display: flex; align-items: center; padding-left: 5px; }
  .layer.sel { background: #3699f5; }
  .branch { width: 5px; height: 8px; border-left: 1px dotted #bbb; margin-right: 1px; background: linear-gradient(#ccc, #ccc) 0 4px / 5px .5px no-repeat; }
  .check { width: 7px; height: 7px; display: flex; align-items: center; justify-content: center; background: #fff; }
  .check.off { border: 1px solid #ccc; }
  .sel .check { background: #80bdf4; }
  .swatch { width: 8px; height: 8px; margin: 0 3px 0 2px; display: flex; align-items: center; justify-content: center; }
  .swatch.fill { border: .5px solid #68806a; }
  .point { width: 3px; height: 3px; border-radius: 50%; background: #4a4a5c; }
  .u { border-bottom: 1px solid #cfe6fb; height: 8px; display: flex; align-items: center; }
  .u :global(.fit) { position: relative; top: .5px; }
  .splitter { height: 2px; width: 46px; margin: 0 auto; background: repeating-linear-gradient(90deg, #ccc 0 1px, transparent 1px 2px); }
  .form { padding: 0 4px; width: 141.500px; display: flex; flex-direction: column; }
  .lab { height: 11px; display: flex; align-items: center; }
  .first { margin-top: 3px; }
  .line { height: 13px; display: flex; align-items: center; gap: 3px; }
  .input { flex: 1; height: 10px; background: #fff; border: 1px solid #c9c9c9; border-radius: 1.500px; }
  .btn { display: flex; align-items: center; justify-content: center; background: linear-gradient(#fdfdfd, #e6e6e6); border: 1px solid #bcbcbc; border-radius: 2px; }
  .sq { width: 13px; height: 13px; }
  .plus { width: 7px; height: 7px; background: linear-gradient(#c0504d, #c0504d) center / 1px 1px no-repeat, linear-gradient(#4b7fc2, #4b7fc2) center / 7px 1px no-repeat, linear-gradient(#4b7fc2, #4b7fc2) center / 1px 7px no-repeat; }
  .crit { height: 16px; display: flex; align-items: center; }
  .combo { margin-left: auto; width: 66px; height: 10px; display: flex; align-items: center; justify-content: space-between; padding: 0 1px 0 2px; border: 1px solid #bcbcbc; border-radius: 1.500px; background: linear-gradient(#fafafa, #e8e8e8); }
  .len { height: 13.200px; display: flex; align-items: center; gap: 2px; }
  .btns { display: flex; gap: 4px; margin: 2px 0 4px; }
  .btns .btn { flex: 1; height: 12px; }
  .wide { height: 13px; gap: 2px; }

  .status { height: 16px; flex: none; display: flex; align-items: center; padding-left: 219px; border-top: 1px solid #d8d8d8; margin-right: 1px; }
  .gear { width: 10.500px; height: 11px; }
  .s1 { margin-left: 4px; }
  .field { height: 10px; display: flex; align-items: center; background: #fff; border: 1px solid #c6c6c6; border-radius: 1.500px; }
  .coord { width: 147.500px; margin-left: 5px; justify-content: center; }
  .s2 { margin-left: 4.500px; }
  .scale { width: 40px; margin-left: 5.500px; padding-left: 1px; justify-content: space-between; }
  .s3 { margin-left: 4.500px; }
  .rot { width: 49px; margin: 0 4px 0 5.500px; padding-left: 2px; justify-content: space-between; height: 11px; }
  .spin { width: 7px; border-left: 1px solid #ccc; }
  .x { margin-right: 4px; }

  .attr { position: absolute; left: 563px; top: 172px; width: 469px; height: 334px; display: flex; flex-direction: column; padding: 0 4px 4.500px; border: 1px solid #1b3353; border-radius: 4px 4px 0 0; background: linear-gradient(#8db0dc 0, #a5c3e8 70px, #9bbce5 90px, #1b58ad 97px, #1c5bb4 100%); }
  .attr-title { height: 15px; flex: none; display: flex; align-items: center; margin: 0 -4px; padding: 0 0 1.500px 4px; border-radius: 3px 3px 0 0; background: linear-gradient(90deg, #87a9d4 0, #8aaddb 130px, #6c97cf 240px, #4c80c4 290px, #1d59ad 320px, #1b56aa 400px, #3e73bd 100%); }
  .attr-title .title-text { margin-left: 3px; }
  .attr-title .caption { margin-right: 4px; height: 11px; }
  .attr-title .wbtn { height: 10px; width: 16px; }
  .attr-title .wbtn.close { width: 23px; }
  .attr-inner { flex: 1; min-height: 0; display: flex; flex-direction: column; background: #f0f0f0; }
  .attr-bar { height: 18.500px; flex: none; display: flex; align-items: center; background: linear-gradient(#f6f6f6, #eee); }
  .qm { margin-left: auto; margin-right: 6px; font-size: 7px; }
  .grid-wrap { height: 277px; flex: none; display: flex; border: 1px solid #69b2f3; border-left-color: #aaa; background: #fff; overflow: hidden; }
  .grid { flex: 1; overflow: hidden; }
  .r { display: flex; width: 291px; height: 11px; }
  .r .rh { width: 16px; height: 11px; flex: none; display: flex; align-items: center; justify-content: center; background: linear-gradient(#f5f5f5, #e0e0e0); border: 1px solid #a8a8a8; border-width: 0 1px 1px 0; padding-top: 1px; }
  .c { width: 55px; flex: none; display: flex; align-items: flex-start; padding-left: 1.500px; border-right: 1px solid #c4c4c4; border-bottom: 1px solid #bdbdbd; }
  .c :global(.fit) { margin-top: -2px; }
  .alt .c { background: #f5f5f5; }
  .c.cur { position: relative; z-index: 1; }
  .c.cur::after { content: ''; position: absolute; inset: 0 -1px -1px -1px; border: 1px solid #1fe07a; }
  .num { justify-content: flex-end; padding-right: 1px; }
  .head { width: auto; background: #f0f0f0; }
  .head .c { justify-content: center; align-items: center; padding: 0; background: linear-gradient(#fff, #eaeaea); }
  .head .c :global(.fit) { margin: 0; }
  .head .pn { gap: 10px; }
  .scroll { width: 9px; display: flex; flex-direction: column; background: #f4f4f4; }
  .sb { height: 9px; display: flex; align-items: center; justify-content: center; background: #f5f5f5; border: 1px solid #bbb; }
  .thumb { height: 14px; border: 1px solid #bbb; background: #fafafa; }
  .space { flex: 1; }
  .attr-foot { flex: 1; display: flex; align-items: center; padding: 0 1px; gap: 0; }
  .show { height: 14px; width: 80px; gap: 3px; position: relative; justify-content: flex-start; padding-left: 4px; }
  .low { position: absolute; right: 0; bottom: 0; }
  .view { width: 14px; height: 13px; }
  .show + .view { margin-left: auto; }
  .view.on { background: #d8d8d8; border-color: #aaa; }
</style>
